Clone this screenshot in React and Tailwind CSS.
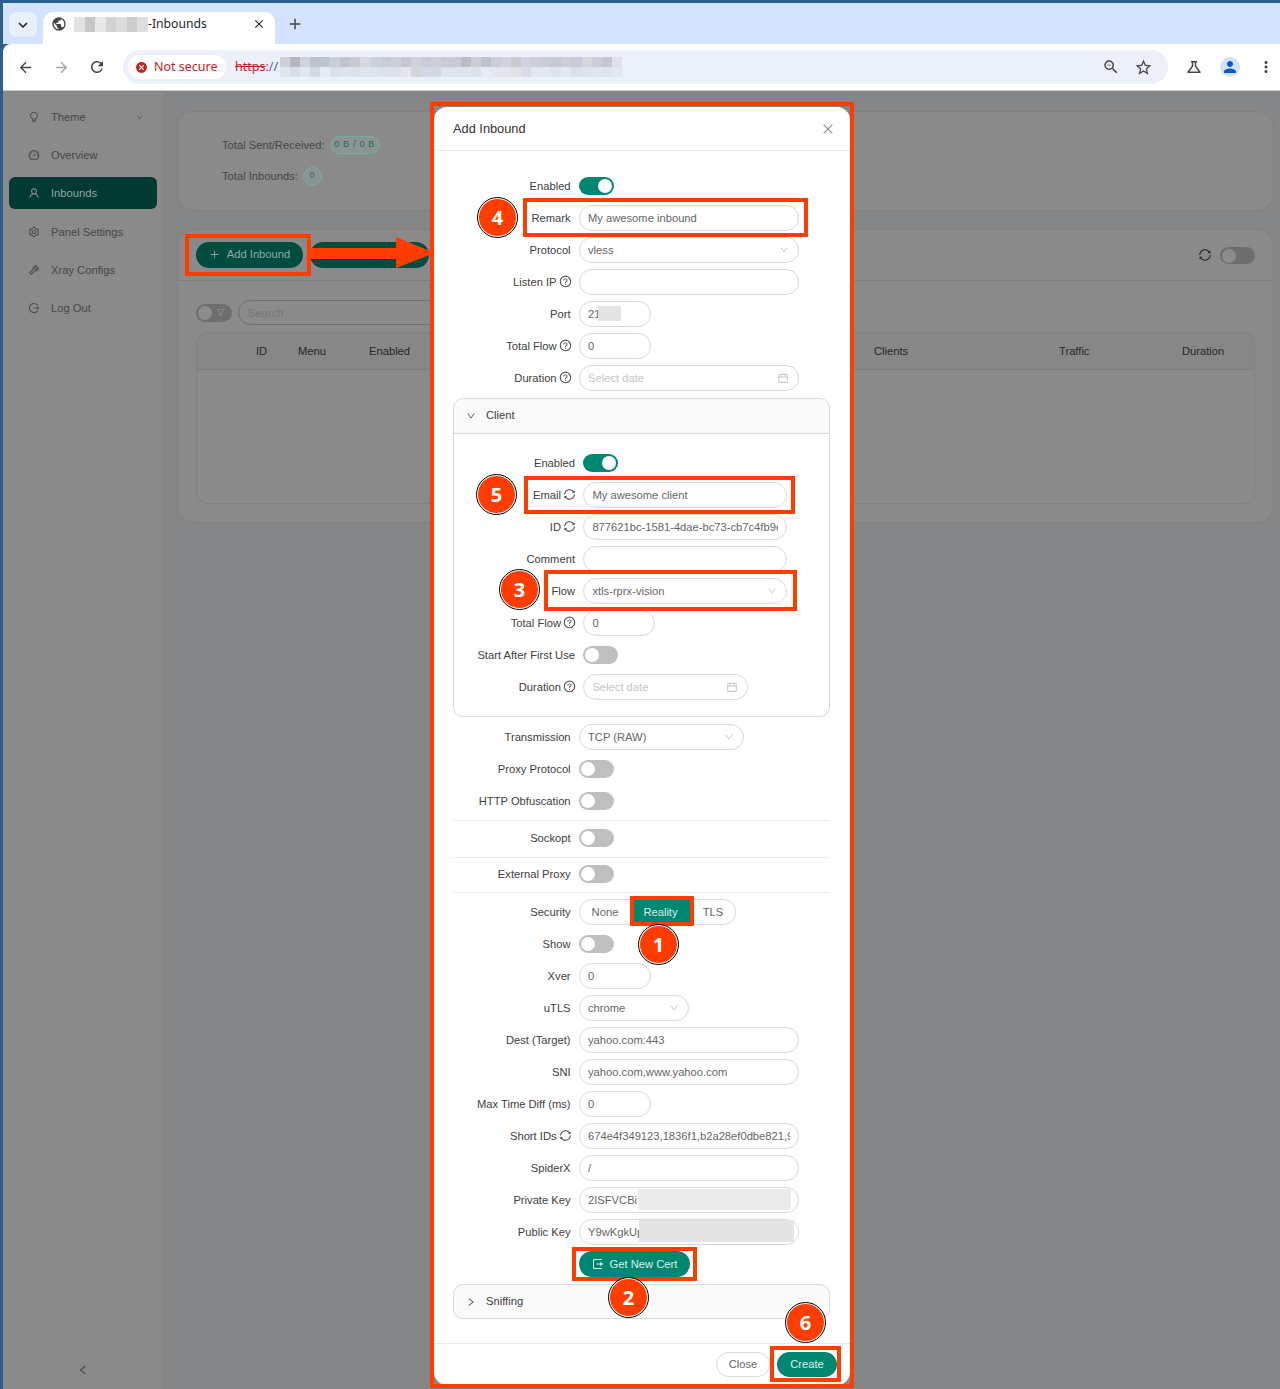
import {
  AiOutlineBulb,
  AiOutlineCalendar,
  AiOutlineClose,
  AiOutlineDashboard,
  AiOutlineDown,
  AiOutlineFilter,
  AiOutlineLeft,
  AiOutlineLogout,
  AiOutlinePlus,
  AiOutlineQuestionCircle,
  AiOutlineRight,
  AiOutlineSetting,
  AiOutlineSync,
  AiOutlineTool,
  AiOutlineUser,
} from 'react-icons/ai';
import {
  MdAdd,
  MdArrowBack,
  MdArrowForward,
  MdCancel,
  MdClose,
  MdKeyboardArrowDown,
  MdMoreVert,
  MdOutlineScience,
  MdPerson,
  MdPublic,
  MdRefresh,
  MdStarBorder,
  MdZoomOut,
} from 'react-icons/md';

const urlTop = ['#cdd2da', '#b4b7bc', '#ced3dd', '#bcc2ce', '#bfc4cd', '#cacfd9', '#bfc4ce', '#c7cbd3', '#d5d8de', '#cbd1da', '#c8ccd3', '#ccd0da', '#c3c8d3', '#d0d3d9', '#c7ccd8', '#cdd1d7', '#c8ccd7', '#c7cbd6', '#bbbec4', '#cbced3', '#bcc1cc', '#cbcfdb', '#cfd3de', '#c8cbd1', '#d0d4e0', '#cbcfdb', '#cacdd7', '#c4cad6', '#cccfd3', '#c5ccd8', '#d3d6dc', '#cbcfda', '#c6c8cf', '#dde2ee'];
const urlBottom = ['#e0e5ee', '#d8dce6', '#e2e6ef', '#d5d9e4', '#e6ebf6', '#dbdfe9', '#dee2eb', '#dde1ea', '#e0e4ed', '#dfe3ec', '#dde1ea', '#dde1ea', '#e2e6ee', '#d4d5d9', '#d3d9e4', '#d3d9e4', '#e0e4ed', '#e0e4ed', '#e0e4ed', '#dde1ea', '#e6ebf6', '#e2e6ef', '#e2e6ef', '#e0e4e9', '#d7dce8', '#e3e7f0', '#e3e7f0', '#dfe3ec', '#e4e8f1', '#dbe0ea', '#dfe3ec', '#e1e5ee', '#dfe3ec', '#e3e7f0'];
const tabCells = ['#e2e2e2', '#c6c6c6', '#e7e7e7', '#d2d2d2', '#dcdcdc', '#cdcdcd', '#dedede'];

const menu = [
  { icon: AiOutlineBulb, label: 'Theme', caret: true },
  { icon: AiOutlineDashboard, label: 'Overview' },
  { icon: AiOutlineUser, label: 'Inbounds', active: true },
  { icon: AiOutlineSetting, label: 'Panel Settings', extraGap: true },
  { icon: AiOutlineTool, label: 'Xray Configs' },
  { icon: AiOutlineLogout, label: 'Log Out' },
];

const Mosaic = ({ cells, className }) => (
  <div className={`flex ${className}`}>
    {cells.map((c, i) => (
      <div key={i} className="h-full w-[10.06px] shrink-0" style={{ backgroundColor: c }} />
    ))}
  </div>
);

const BrowserBar = () => (
  <div className="shrink-0">
    <div className="h-[41px] bg-[#d3e3fd] flex items-end relative">
      <div className="absolute left-[6px] top-[9px] w-[28px] h-[25px] rounded-lg bg-[#e9f0fd] flex items-center justify-center text-[#1f1f1f]">
        <MdKeyboardArrowDown size={18} />
      </div>
      <div className="ml-[40px] w-[232px] h-[32px] bg-white rounded-t-[10px] flex items-center pl-[8px] pr-[9px] pb-[8px] font-['Noto_Sans',sans-serif] text-[12.2px] text-[#1f1f1f]">
        <MdPublic size={16} className="text-[#444746] shrink-0" />
        <Mosaic cells={tabCells} className="ml-[7px] h-[15px] w-[74px] [&>div]:w-[10.5px]" />
        <span className="grow">-Inbounds</span>
        <MdClose size={14} />
      </div>
      <MdAdd size={18} className="ml-[11px] mb-[11px] text-[#444746]" />
    </div>
    <div className="h-[47px] bg-white border-b border-[#c7c7c7] flex items-start pt-[6px] text-[#444746] rounded-tl-[8px] font-['Noto_Sans',sans-serif]">
      <div className="flex items-center h-[34px]">
        <MdArrowBack size={17} className="ml-[14px]" />
        <MdArrowForward size={17} className="ml-[19px] text-[#a4a6a8]" />
        <MdRefresh size={18} className="ml-[18px]" />
      </div>
      <div className="ml-[17px] w-[1045px] h-[34px] rounded-full bg-[#ebf0f9] flex items-center pl-[5px] pr-[15px] text-[12.5px]">
        <div className="w-[98px] h-[24px] rounded-full bg-white flex items-center pl-[7px] text-[#c5221f] gap-[6px] shrink-0">
          <MdCancel size={13} className="shrink-0" />
          <span>Not secure</span>
        </div>
        <span className="ml-[9px] text-[#c5221f] line-through">https</span>
        <span className="text-[#5f6368]">:</span>
        <span className="text-[#3b6fb6]">//</span>
        <div className="ml-[2px]">
          <Mosaic cells={urlTop} className="h-[10px]" />
          <Mosaic cells={urlBottom} className="h-[10px]" />
        </div>
        <div className="grow" />
        <MdZoomOut size={18} />
        <MdStarBorder size={19} className="ml-[14px]" />
      </div>
      <div className="flex items-center h-[34px]">
        <MdOutlineScience size={18} className="ml-[17px]" />
        <div className="ml-[17px] w-[20px] h-[20px] rounded-full bg-[#d3e3fd] flex items-center justify-center text-[#0b57d0]">
          <MdPerson size={18} />
        </div>
        <MdMoreVert size={18} className="ml-[17px]" />
      </div>
    </div>
  </div>
);

const Sidebar = () => (
  <div className="w-[160px] shrink-0 bg-[#8a8a8a] pt-[10px] px-[6px] flex flex-col gap-[6px] relative">
    {menu.map((m) => (
      <div
        key={m.label}
        className={`h-[32px] flex items-center pl-[19px] pr-[14px] rounded-[6px] text-[#474747] ${m.active ? 'bg-[#003a32]' : ''} ${m.extraGap ? 'mt-[1px]' : ''}`}
      >
        <m.icon size={12} className={m.active ? 'text-[#8fa3a0]' : 'text-[#444]'} />
        <span className={`ml-[11px] grow ${m.active ? 'text-[#8fa8a4]' : ''}`}>{m.label}</span>
        {m.caret && <AiOutlineDown size={7} />}
      </div>
    ))}
    <AiOutlineLeft size={12} className="absolute left-[74px] bottom-[13px] text-[#3d3d3d]" />
  </div>
);

const Badge = ({ children, className }) => (
  <span className={`inline-flex items-center justify-center h-[18px] rounded-full border border-[#74ad9d] bg-[#8b9492] text-[9px] tracking-[0.7px] text-[#1f6b5c] ${className}`}>
    {children}
  </span>
);

const Background = () => (
  <div className="grow bg-[#848688] pl-[14px] pr-[6px] pt-[20px] flex flex-col gap-[18px]">
    <div className="h-[100px] rounded-[16px] border border-[#808080] bg-[#8a8a8a] pl-[44px] pt-[22px] text-[#474747]">
      <div className="h-[22px] flex items-center gap-[5px]">
        Total Sent/Received:
        <Badge className="w-[50px]">0 B / 0 B</Badge>
      </div>
      <div className="h-[22px] mt-[9px] flex items-center gap-[5px]">
        Total Inbounds:
        <Badge className="w-[19px] !h-[19px]">0</Badge>
      </div>
    </div>
    <div className="h-[294px] rounded-[16px] border border-[#808080] bg-[#8a8a8a]">
      <div className="h-[51px] border-b border-[#7c7c7c] flex items-center pl-[18px] pr-[18px]">
        <div className="w-[107px] h-[26px] rounded-full bg-[#004d40] flex items-center justify-center gap-[7px] pb-[1px] text-[#8fa8a4]">
          <AiOutlinePlus size={11} />
          Add Inbound
        </div>
        <div className="ml-[7px] w-[119px] h-[26px] rounded-full bg-[#004d40]" />
        <div className="grow" />
        <AiOutlineSync size={14} className="text-[#262626]" />
        <div className="ml-[8px] w-[35px] h-[17px] rounded-full bg-[#6e6e6e] p-[2px]">
          <div className="w-[14px] h-[14px] rounded-full bg-[#8c8c8c]" />
        </div>
      </div>
      <div className="px-[18px] pt-[19px]">
        <div className="flex items-center h-[25px]">
          <div className="w-[36px] h-[18px] rounded-full bg-[#6e6e6e] flex items-center p-[2px]">
            <div className="w-[14px] h-[14px] rounded-full bg-[#8c8c8c]" />
            <AiOutlineFilter size={9} className="ml-[4px] text-[#909090]" />
          </div>
          <div className="ml-[6px] w-[300px] h-[25px] rounded-full border border-[#6f6f6f] pl-[9px] pt-[1px] flex items-center text-[#767676]">Search</div>
        </div>
        <div className="mt-[7px] h-[172px] rounded-[12px] border border-[#808080]">
          <div className="h-[37px] border-b border-[#7f7f7f] bg-[#878787] rounded-t-[12px] grid grid-cols-[59px_42px_71px_505px_185px_123px_1fr] items-center text-[#26282a]">
            <span />
            <span>ID</span>
            <span>Menu</span>
            <span>Enabled</span>
            <span>Clients</span>
            <span>Traffic</span>
            <span>Duration</span>
          </div>
        </div>
      </div>
    </div>
  </div>
);

const Toggle = ({ on }) => (
  <div className={`w-[35px] h-[18px] rounded-full p-[2px] flex ${on ? 'bg-[#008771] justify-end' : 'bg-[#bfbfbf]'}`}>
    <div className="w-[14px] h-[14px] rounded-full bg-white" />
  </div>
);

const Help = () => <AiOutlineQuestionCircle size={13} className="ml-[2px] -mr-[1px] shrink-0 text-[#3d3d3d]" />;
const Sync = () => <AiOutlineSync size={13} className="ml-[2px] -mr-[1px] shrink-0 text-[#3d3d3d]" />;

const Row = ({ label, extra, w = 117.6, children }) => (
  <div className="h-8 flex items-center gap-[8.4px]">
    <div className="flex items-center justify-end shrink-0 text-[#404040]" style={{ width: w }}>
      {label}
      {extra}
    </div>
    {children}
  </div>
);

const Field = ({ value, placeholder, width = 'w-[220px]', children }) => (
  <div className={`relative h-[25.6px] ${width}`}>
    <input
      readOnly
      value={value || ''}
      placeholder={placeholder}
      className="w-full h-full rounded-full border border-[#d9d9d9] bg-white pl-[8px] pr-[8px] text-[#666] outline-none placeholder:text-[#c4c4c4]"
    />
    {children}
  </div>
);

const Select = ({ value, width = 'w-[220px]' }) => (
  <div className={`h-[25.6px] ${width} rounded-full border border-[#d9d9d9] pl-[8px] pr-[9px] flex items-center justify-between text-[#666]`}>
    {value}
    <AiOutlineDown size={10} className="text-[#bfbfbf]" />
  </div>
);

const DateField = ({ width = 'w-[220px]' }) => (
  <div className={`h-[25.6px] ${width} rounded-full border border-[#d9d9d9] pl-[8px] pr-[9px] flex items-center justify-between text-[#c4c4c4]`}>
    Select date
    <AiOutlineCalendar size={12} className="text-[#bfbfbf]" />
  </div>
);

const Divider = ({ className }) => <div className={`h-px bg-[#e8e8e8] ${className}`} />;

const CertIcon = () => (
  <svg width="12" height="12" viewBox="0 0 12 12" fill="none" stroke="currentColor" strokeWidth="1">
    <path d="M10 1.5H1.5v9H10" />
    <path d="M4.5 6h6" />
    <path d="M8.5 4.5 10.5 6 8.5 7.5Z" fill="currentColor" />
  </svg>
);

const Modal = () => (
  <div className="absolute left-[434px] top-[107px] w-[416px] h-[1278px] bg-white rounded-[13px] flex flex-col">
    <div className="h-[44px] shrink-0 border-b border-[#e8e8e8] flex items-center justify-between pl-[19px] pr-[15px] text-[12.8px] text-[#333]">
      Add Inbound
      <AiOutlineClose size={14} className="text-[#8c8c8c]" />
    </div>
    <div className="grow pl-[19px] pr-[20px] pt-[19px]">
      <Row label="Enabled"><Toggle on /></Row>
      <Row label="Remark"><Field value="My awesome inbound" /></Row>
      <Row label="Protocol"><Select value="vless" /></Row>
      <Row label="Listen IP" extra={<Help />}><Field /></Row>
      <Row label="Port">
        <Field value="21" width="w-[72px]">
          <div className="absolute left-[19px] top-[5px] w-[23px] h-[15px] bg-[#e4e4e4]" />
        </Field>
      </Row>
      <Row label="Total Flow" extra={<Help />}><Field value="0" width="w-[72px]" /></Row>
      <Row label="Duration" extra={<Help />}><DateField /></Row>

      <div className="mt-[4px] h-[319px] rounded-[10px] border border-[#d9d9d9]">
        <div className="h-[35px] bg-[#fafafa] border-b border-[#d9d9d9] rounded-t-[10px] flex items-center pl-[12px] text-[#404040]">
          <AiOutlineDown size={10} className="text-[#404040]" />
          <span className="ml-[10px] -mt-[2px]">Client</span>
        </div>
        <div className="pt-[13px]">
          <Row w={121} label="Enabled"><Toggle on /></Row>
          <Row w={121} label="Email" extra={<Sync />}><Field value="My awesome client" width="w-[204px]" /></Row>
          <Row w={121} label="ID" extra={<Sync />}><Field value="877621bc-1581-4dae-bc73-cb7c4fb9e0a1" width="w-[204px]" /></Row>
          <Row w={121} label="Comment"><Field width="w-[204px]" /></Row>
          <Row w={121} label="Flow"><Select value="xtls-rprx-vision" width="w-[204px]" /></Row>
          <Row w={121} label="Total Flow" extra={<Help />}><Field value="0" width="w-[72px]" /></Row>
          <Row w={121} label="Start After First Use"><Toggle /></Row>
          <Row w={121} label="Duration" extra={<Help />}><DateField width="w-[165px]" /></Row>
        </div>
      </div>

      <div className="mt-[4px]">
        <Row label="Transmission"><Select value="TCP (RAW)" width="w-[165px]" /></Row>
        <Row label="Proxy Protocol"><Toggle /></Row>
        <Row label="HTTP Obfuscation"><Toggle /></Row>
      </div>
      <Divider className="mt-[3px] mb-[1px]" />
      <Row label="Sockopt"><Toggle /></Row>
      <Divider className="mt-[3px]" />
      <Row label="External Proxy"><Toggle /></Row>
      <Divider className="mt-[2px] mb-[3px]" />
      <Row label="Security">
        <div className="h-[25.6px] flex rounded-full border border-[#d9d9d9] text-[#666]">
          <span className="w-[50px] flex items-center justify-center">None</span>
          <span className="w-[61px] -my-px flex items-center justify-center bg-[#008771] text-white/85">Reality</span>
          <span className="w-[44px] flex items-center justify-center">TLS</span>
        </div>
      </Row>
      <Row label="Show"><Toggle /></Row>
      <Row label="Xver"><Field value="0" width="w-[72px]" /></Row>
      <Row label="uTLS"><Select value="chrome" width="w-[110px]" /></Row>
      <Row label="Dest (Target)"><Field value="yahoo.com:443" /></Row>
      <Row label="SNI"><Field value="yahoo.com,www.yahoo.com" /></Row>
      <Row label="Max Time Diff (ms)"><Field value="0" width="w-[72px]" /></Row>
      <Row label="Short IDs" extra={<Sync />}><Field value="674e4f349123,1836f1,b2a28ef0dbe821,9a4" /></Row>
      <Row label="SpiderX"><Field value="/" /></Row>
      <Row label="Private Key">
        <Field value="2ISFVCBi">
          <div className="absolute left-[59px] top-[2px] w-[153px] h-[21px] bg-[#ebebeb]" />
        </Field>
      </Row>
      <Row label="Public Key">
        <Field value="Y9wKgkUp">
          <div className="absolute left-[60px] top-[1px] w-[155px] h-[22px] bg-[#e4e4e4]" />
        </Field>
      </Row>
      <div className="h-8 flex items-center pl-[126px]">
        <div className="w-[111px] h-[26px] rounded-full bg-[#008771] flex items-center justify-center gap-[6px] text-white/85">
          <CertIcon />
          Get New Cert
        </div>
      </div>
      <div className="mt-[4px] h-[35px] rounded-[10px] border border-[#d9d9d9] bg-[#fafafa] flex items-center pl-[12px] text-[#404040]">
        <AiOutlineRight size={10} />
        <span className="ml-[10px]">Sniffing</span>
      </div>
    </div>
    <div className="h-[42px] shrink-0 border-t border-[#e8e8e8] flex items-center justify-end gap-[7px] pr-[13px]">
      <div className="w-[54px] h-[25px] rounded-full border border-[#d9d9d9] flex items-center justify-center text-[#666]">Close</div>
      <div className="w-[60px] h-[25px] rounded-full bg-[#008771] flex items-center justify-center text-white/85">Create</div>
    </div>
  </div>
);

const marks = [
  'left-[185px] top-[234px] w-[126px] h-[42px]',
  'left-[523px] top-[198px] w-[285px] h-[39px]',
  'left-[524px] top-[476px] w-[271px] h-[38px]',
  'left-[544px] top-[570px] w-[253px] h-[41px]',
  'left-[630px] top-[896px] w-[64px] h-[30px]',
  'left-[572px] top-[1247px] w-[125px] h-[34px]',
  'left-[770px] top-[1346px] w-[71px] h-[36px]',
  'left-[430px] top-[102px] w-[424px] h-[1286px]',
];

const steps = [
  { n: 4, pos: 'left-[478px] top-[198px]' },
  { n: 5, pos: 'left-[477px] top-[475px]' },
  { n: 3, pos: 'left-[500px] top-[570px]' },
  { n: 1, pos: 'left-[639px] top-[925px]' },
  { n: 2, pos: 'left-[609px] top-[1278px]' },
  { n: 6, pos: 'left-[786px] top-[1303px]' },
];

const Annotations = () => (
  <>
    {marks.map((m) => (
      <div key={m} className={`absolute border-[4px] border-[#ff3d00] ${m}`} />
    ))}
    <svg className="absolute left-[311px] top-[237px]" width="124" height="32" viewBox="0 0 124 32">
      <path d="M0 11H85V0L124 16L85 31V22H0Z" fill="#ff3d00" />
    </svg>
    {steps.map((s) => (
      <div
        key={s.n}
        className={`absolute w-[39px] h-[39px] rounded-full bg-[#ff3d00] border-[1.5px] border-white outline outline-[1px] outline-black flex items-center justify-center text-white font-bold text-[20px] font-['Open_Sans',sans-serif] ${s.pos}`}
      >
        {s.n}
      </div>
    ))}
  </>
);

export default function App() {
  return (
    <div className="relative w-[1280px] h-[1389px] overflow-hidden bg-[#2b5f8e] pl-[3px] pt-[3px] flex flex-col text-[11.2px] font-['Liberation_Sans',Arial,sans-serif]">
      <BrowserBar />
      <div className="grow flex min-h-0">
        <Sidebar />
        <Background />
      </div>
      <Modal />
      <Annotations />
    </div>
  );
}
